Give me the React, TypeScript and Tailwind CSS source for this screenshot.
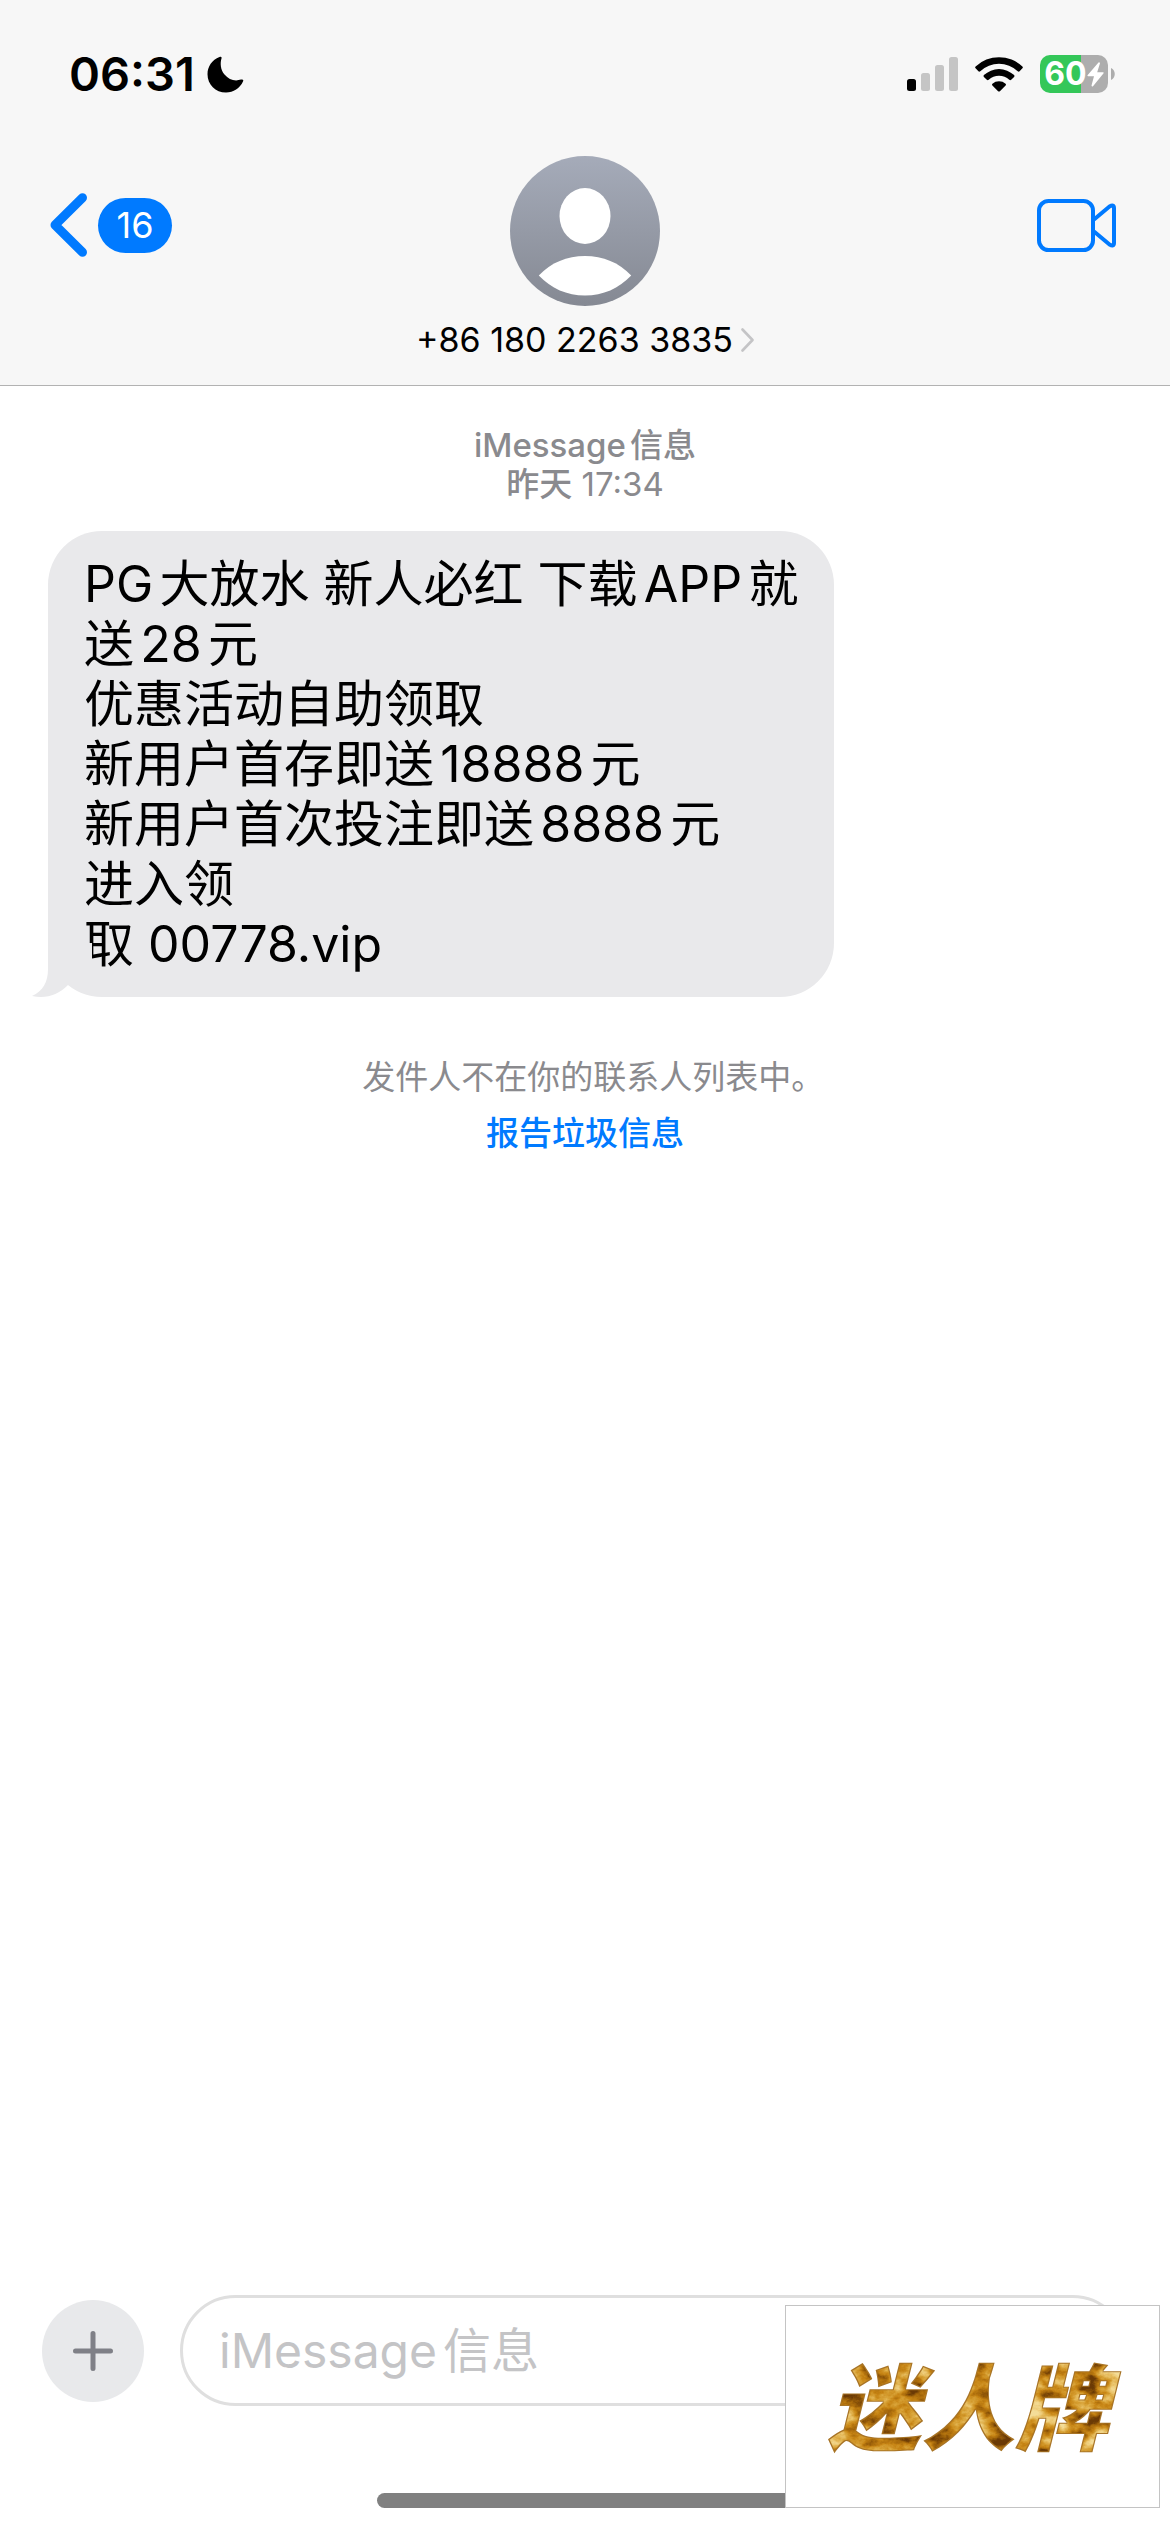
import { useState, FormEvent } from "react";

interface Message {
    id: number;
    lines: string[];
}

interface Conversation {
    service: string;
    day: string;
    time: string;
    phone: string;
    unread: number;
}

const conversation: Conversation = {
    service: "iMessage信息",
    day: "昨天",
    time: "17:34",
    phone: "+86 180 2263 3835",
    unread: 16,
};

const messages: Message[] = [
    {
        id: 1,
        lines: [
            "PG大放水 新人必红 下载APP就",
            "送28元",
            "优惠活动自助领取",
            "新用户首存即送18888元",
            "新用户首次投注即送8888元",
            "进入领",
            "取 00778.vip",
        ],
    },
];

function StatusBar() {
    return (
        <div className="flex h-[148px] items-center justify-between pl-[69px] pr-[55px]">
            <div className="flex items-center gap-3">
                <span className="text-[47px] leading-[60px] font-semibold">06:31</span>
                <svg width="37" height="37" viewBox="0 0 37 37">
                    <path
                        d="M12.500 1C14 .2 15 .9 14.500 2.500C13 7 13.500 14 17.500 18.500C22 24 28 25.500 34 23.600C36 23 36.800 24 36 25.600C32.800 32.500 26.500 36.500 19 36.500C8.500 36.500 .5 28.500 .5 18.200C.5 10.500 5 4 12.500 1Z"
                        fill="#000"
                    />
                </svg>
            </div>
            <div className="flex items-center gap-[17px]">
                <svg width="51" height="36" viewBox="0 0 51 36">
                    <rect x="0" y="23" width="9" height="12" rx="2.500" fill="#000" />
                    <rect x="14" y="17" width="9" height="18" rx="2.500" fill="#c5c5c5" />
                    <rect x="28" y="9" width="9" height="26" rx="2.500" fill="#c5c5c5" />
                    <rect x="42" y="1" width="9" height="34" rx="2.500" fill="#c5c5c5" />
                </svg>
                <svg width="48" height="36" viewBox="0 0 48 36">
                    <path
                        d="M.6 10.500A34 34 0 0 1 47.400 10.500Q48.300 11.400 47.400 12.300L44.600 15.200Q43.700 16.100 42.700 15.200A27.500 27.500 0 0 0 5.300 15.200Q4.300 16.100 3.400 15.200L.6 12.300Q-.3 11.400 .6 10.500Z"
                        fill="#000"
                    />
                    <path
                        d="M8.900 19.100A22 22 0 0 1 39.100 19.100Q40 20 39.100 20.900L36.200 23.800Q35.300 24.700 34.300 23.800A15 15 0 0 0 13.700 23.800Q12.700 24.700 11.800 23.800L8.900 20.900Q8 20 8.900 19.100Z"
                        fill="#000"
                    />
                    <path
                        d="M17.400 27.800A10 10 0 0 1 30.600 27.800Q31.500 28.700 30.600 29.500L24.900 35.200Q24 36 23.100 35.200L17.400 29.500Q16.500 28.700 17.400 27.800Z"
                        fill="#000"
                    />
                </svg>
                <div className="flex items-center gap-[3px]">
                    <div className="flex h-[38px] w-[68px] items-center justify-center rounded-[10px] bg-[linear-gradient(to_right,#34c759_60%,#adadad_60%)] text-white">
                        <span className="text-[32px] leading-[38px] font-bold">60</span>
                        <svg width="17" height="25" viewBox="0 0 17 25">
                            <path
                                d="M11.500 .5L.5 13.200Q.2 14.200 1.200 14.200H7L4.500 23.500Q4.800 25 6 24.200L16.600 11.300Q17 10.200 16 10.200H10.200L13 1.300Q12.600 0 11.500 .5Z"
                                fill="#fff"
                            />
                        </svg>
                    </div>
                    <svg width="4" height="12" viewBox="0 0 4 12">
                        <path d="M0 0C5 2 5 10 0 12Z" fill="#adadad" />
                    </svg>
                </div>
            </div>
        </div>
    );
}

function Avatar() {
    return (
        <svg width="150" height="150" viewBox="0 0 150 150">
            <defs>
                <linearGradient id="avatar" x1="0" y1="0" x2="0" y2="1">
                    <stop offset="0" stopColor="#a5abb9" />
                    <stop offset="1" stopColor="#858993" />
                </linearGradient>
            </defs>
            <circle cx="75" cy="75" r="75" fill="url(#avatar)" />
            <ellipse cx="75" cy="60" rx="25.500" ry="28" fill="#fff" />
            <path
                d="M28.800 119.500C41 106.500 57 100 75 100S109 106.500 121.200 119.500C109 132.500 93 139.500 75 139.500S41 132.500 28.800 119.500Z"
                fill="#fff"
            />
        </svg>
    );
}

function NavBar() {
    return (
        <nav className="grid grid-cols-[1fr_auto_1fr] items-start px-[50px] pt-2 pb-[25px]">
            <button
                type="button"
                aria-label="返回"
                className="flex h-[138px] items-center gap-[11px] justify-self-start"
            >
                <svg width="37" height="64" viewBox="0 0 37 64">
                    <path
                        d="M32.500 4.700L5 32L32.500 59.300"
                        fill="none"
                        stroke="#007aff"
                        strokeWidth="9"
                        strokeLinecap="round"
                        strokeLinejoin="round"
                    />
                </svg>
                <span className="flex h-[55px] w-[74px] items-center justify-center rounded-full bg-[#007aff] text-4xl text-white">
                    {conversation.unread}
                </span>
            </button>
            <button type="button" className="flex flex-col items-center">
                <Avatar />
                <span className="mt-[14px] flex items-center gap-2 text-[34px] leading-10">
                    {conversation.phone}
                    <svg width="13" height="24" viewBox="0 0 13 24">
                        <path
                            d="M1.500 1.500L11.500 12L1.500 22.500"
                            fill="none"
                            stroke="#c4c4c6"
                            strokeWidth="2.600"
                            strokeLinecap="round"
                            strokeLinejoin="round"
                        />
                    </svg>
                </span>
            </button>
            <button
                type="button"
                aria-label="视频通话"
                className="flex h-[138px] items-center justify-self-end pr-1"
            >
                <svg width="79" height="53" viewBox="0 0 79 53">
                    <g fill="none" stroke="#007aff" strokeWidth="4" strokeLinejoin="round">
                        <rect x="2" y="2" width="54" height="49" rx="9.500" />
                        <path d="M57 20.500L72.500 7.500Q77 5 77 9V44Q77 48 72.500 45.500L57 32.500" />
                    </g>
                </svg>
            </button>
        </nav>
    );
}

function Bubble({ lines }: { lines: string[] }) {
    return (
        <div className="relative mt-[27px] ml-12 w-[786px] max-w-[80%] rounded-[54px] bg-[#e9e9eb] px-9 py-[23px] text-[50px] leading-[60px]">
            {lines.map((line) => (
                <p key={line} className="whitespace-nowrap">
                    {line}
                </p>
            ))}
            {/* tail */}
            <svg
                className="absolute bottom-0 -left-4"
                width="60"
                height="54"
                viewBox="0 0 60 54"
            >
                <path
                    d="M16 0V26C16 39 11 48 0 53C14 56 26 52 36 42L60 30V0Z"
                    fill="#e9e9eb"
                />
            </svg>
        </div>
    );
}

// sponsor badge pinned over the composer
function Badge() {
    return (
        <div className="absolute right-[10px] bottom-6 flex h-[203px] w-[375px] items-center justify-center border border-[#c4c4c4] bg-white">
            <svg width="310" height="120" viewBox="0 0 310 120">
                <defs>
                    <filter id="gold" x="0" y="0" width="1" height="1" colorInterpolationFilters="sRGB">
                        <feTurbulence type="fractalNoise" baseFrequency="0.035 0.050" numOctaves="5" seed="7" />
                        <feColorMatrix
                            type="matrix"
                            values="2 0 0 0 -0.560  2 0 0 0 -0.560  2 0 0 0 -0.560  0 0 0 0 1"
                        />
                        <feComponentTransfer result="metal">
                            <feFuncR type="table" tableValues="0.420 0.640 0.780 0.850 0.920 0.960" />
                            <feFuncG type="table" tableValues="0.230 0.400 0.520 0.640 0.770 0.870" />
                            <feFuncB type="table" tableValues="0.020 0.040 0.080 0.220 0.420 0.600" />
                        </feComponentTransfer>
                        {/* darker rim left around the metal */}
                        <feMorphology in="SourceGraphic" operator="erode" radius="1" result="core" />
                        <feComposite in="metal" in2="core" operator="in" result="face" />
                        <feMerge>
                            <feMergeNode in="SourceGraphic" />
                            <feMergeNode in="face" />
                        </feMerge>
                    </filter>
                </defs>
                <text
                    x="9"
                    y="96"
                    fill="#a87426"
                    filter="url(#gold)"
                    className="text-[94px] font-black italic"
                >
                    迷人牌
                </text>
            </svg>
        </div>
    );
}

function Composer() {
    const [draft, setDraft] = useState("");

    const handleSubmit = (e: FormEvent<HTMLFormElement>) => {
        e.preventDefault();
        setDraft("");
    };

    return (
        <form className="flex items-center gap-9 px-[42px]" onSubmit={handleSubmit}>
            <button
                type="button"
                aria-label="添加"
                className="flex size-[102px] shrink-0 items-center justify-center rounded-full bg-[#e8e9eb]"
            >
                <svg width="40" height="40" viewBox="0 0 40 40">
                    <path
                        d="M20 2.500V37.500M2.500 20H37.500"
                        stroke="#7f8087"
                        strokeWidth="5"
                        strokeLinecap="round"
                    />
                </svg>
            </button>
            <input
                type="text"
                name="message"
                aria-label={conversation.service}
                className="h-[111px] min-w-0 flex-1 rounded-full border-3 border-[#dfdfdf] bg-white px-9 text-5xl placeholder:text-[#c4c4c6] focus:outline-none"
                placeholder={conversation.service}
                value={draft}
                onChange={(e) => setDraft(e.target.value)}
            />
        </form>
    );
}

function App() {
    return (
        <div className="relative flex min-h-screen flex-col bg-white font-['Inter','Noto_Sans_CJK_SC',sans-serif] text-black [text-autospace:normal]">
            <header className="border-b border-[#b2b2b2] bg-[#f7f7f7]">
                <StatusBar />
                <NavBar />
            </header>

            <main className="flex-1 pt-10">
                <div className="text-center text-[33px] leading-[39px] text-[#8a8a8e]">
                    <p className="font-medium">{conversation.service}</p>
                    <p>
                        <span className="font-medium">{conversation.day}</span>{" "}
                        {conversation.time}
                    </p>
                </div>
                {messages.map((message) => (
                    <Bubble key={message.id} lines={message.lines} />
                ))}
                <div className="mt-[52px] flex flex-col items-center text-[33px] leading-[56px]">
                    <p className="text-[#8a8a8e] [font-feature-settings:'halt']">
                        发件人不在你的联系人列表中。
                    </p>
                    <a href="#report" className="font-medium text-[#007aff]">
                        报告垃圾信息
                    </a>
                </div>
            </main>

            <footer className="pb-6">
                <Composer />
                <div className="mx-auto mt-[87px] h-[15px] w-[416px] rounded-full bg-[#808080]" />
            </footer>

            <Badge />
        </div>
    );
}

export default App;
